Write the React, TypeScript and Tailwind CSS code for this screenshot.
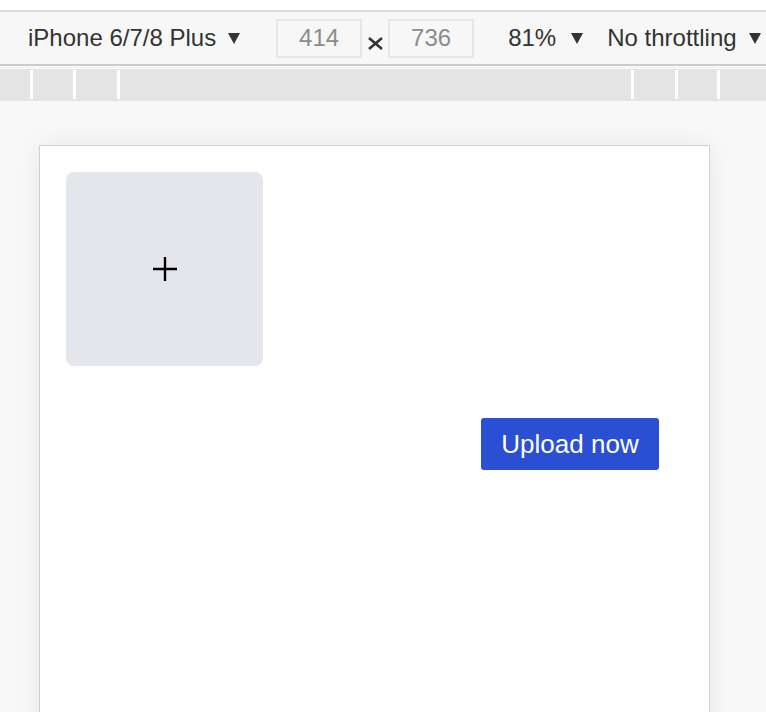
import React from "react";

function Caret() {
  return (
    <svg width="12" height="11" viewBox="0 0 12 11" className="shrink-0">
      <polygon points="0,0 12,0 6,11" fill="#333333" />
    </svg>
  );
}

export default function App() {
  const font = { fontFamily: '"Liberation Sans", Arial, sans-serif' };
  return (
    <div className="w-[766px] h-[712px] overflow-hidden bg-white flex flex-col" style={font}>
      <div className="h-[10px] shrink-0 bg-white" />
      <div className="h-[2px] shrink-0 bg-[#dcdcdc]" />
      <div className="h-[52px] shrink-0 bg-[#f7f7f7] flex items-center text-[24px] text-[#333333] whitespace-nowrap">
        <div className="ml-[28px] flex items-center">
          <span>iPhone 6/7/8 Plus</span>
          <span className="ml-[12px]"><Caret /></span>
        </div>
        <div className="ml-[36px] w-[86px] h-[39px] border-2 border-[#e6e6e6] bg-[#f7f7f7] flex items-center justify-center text-[#8c8c8c]">414</div>
        <div className="w-[26px] h-[39px] flex justify-center items-start pt-[18px]">
          <svg width="15" height="13" viewBox="0 0 15 13">
            <path d="M1 1 L14 12 M14 1 L1 12" stroke="#333333" strokeWidth="2.6" fill="none" />
          </svg>
        </div>
        <div className="w-[86px] h-[39px] border-2 border-[#e6e6e6] bg-[#f7f7f7] flex items-center justify-center text-[#8c8c8c]">736</div>
        <div className="ml-[34px] flex items-center">
          <span>81%</span>
          <span className="ml-[15px]"><Caret /></span>
        </div>
        <div className="ml-[24px] flex items-center">
          <span>No throttling</span>
          <span className="ml-[12px]"><Caret /></span>
        </div>
      </div>
      <div className="h-[2px] shrink-0 bg-[#cccccc]" />
      <div className="h-[3px] shrink-0 bg-[#f7f7f7]" />
      <div className="h-[32px] shrink-0 bg-[#e4e4e4] flex items-start pt-[1px]">
        <div className="w-[30px]" />
        <div className="w-[3px] h-[29px] bg-white" />
        <div className="w-[40px]" />
        <div className="w-[3px] h-[29px] bg-white" />
        <div className="w-[41px]" />
        <div className="w-[3px] h-[29px] bg-white" />
        <div className="w-[511px]" />
        <div className="w-[3px] h-[29px] bg-white" />
        <div className="w-[41px]" />
        <div className="w-[3px] h-[29px] bg-white" />
        <div className="w-[39px]" />
        <div className="w-[3px] h-[29px] bg-white" />
      </div>
      <div className="flex-1 bg-[#f8f8f8] pl-[39px] pt-[44px]">
        <div className="w-[671px] h-[600px] bg-white border border-[#d2d2d2] shadow-[0_0_24px_rgba(0,0,0,0.07)] pt-[26px] pl-[26px] pr-[50px] flex flex-col">
          <div className="w-[197px] h-[194px] rounded-[8px] bg-[#e5e6eb] flex items-center justify-center">
            <svg width="24" height="24" viewBox="0 0 24 24">
              <path d="M12 0 V24 M0 12 H24" stroke="#000000" strokeWidth="2.4" fill="none" />
            </svg>
          </div>
          <div className="flex justify-end mt-[52px]">
            <button className="w-[178px] h-[52px] rounded-[3px] bg-[#2b4fd2] text-white text-[26px] flex items-center justify-center">
              Upload now
            </button>
          </div>
        </div>
      </div>
    </div>
  );
}
